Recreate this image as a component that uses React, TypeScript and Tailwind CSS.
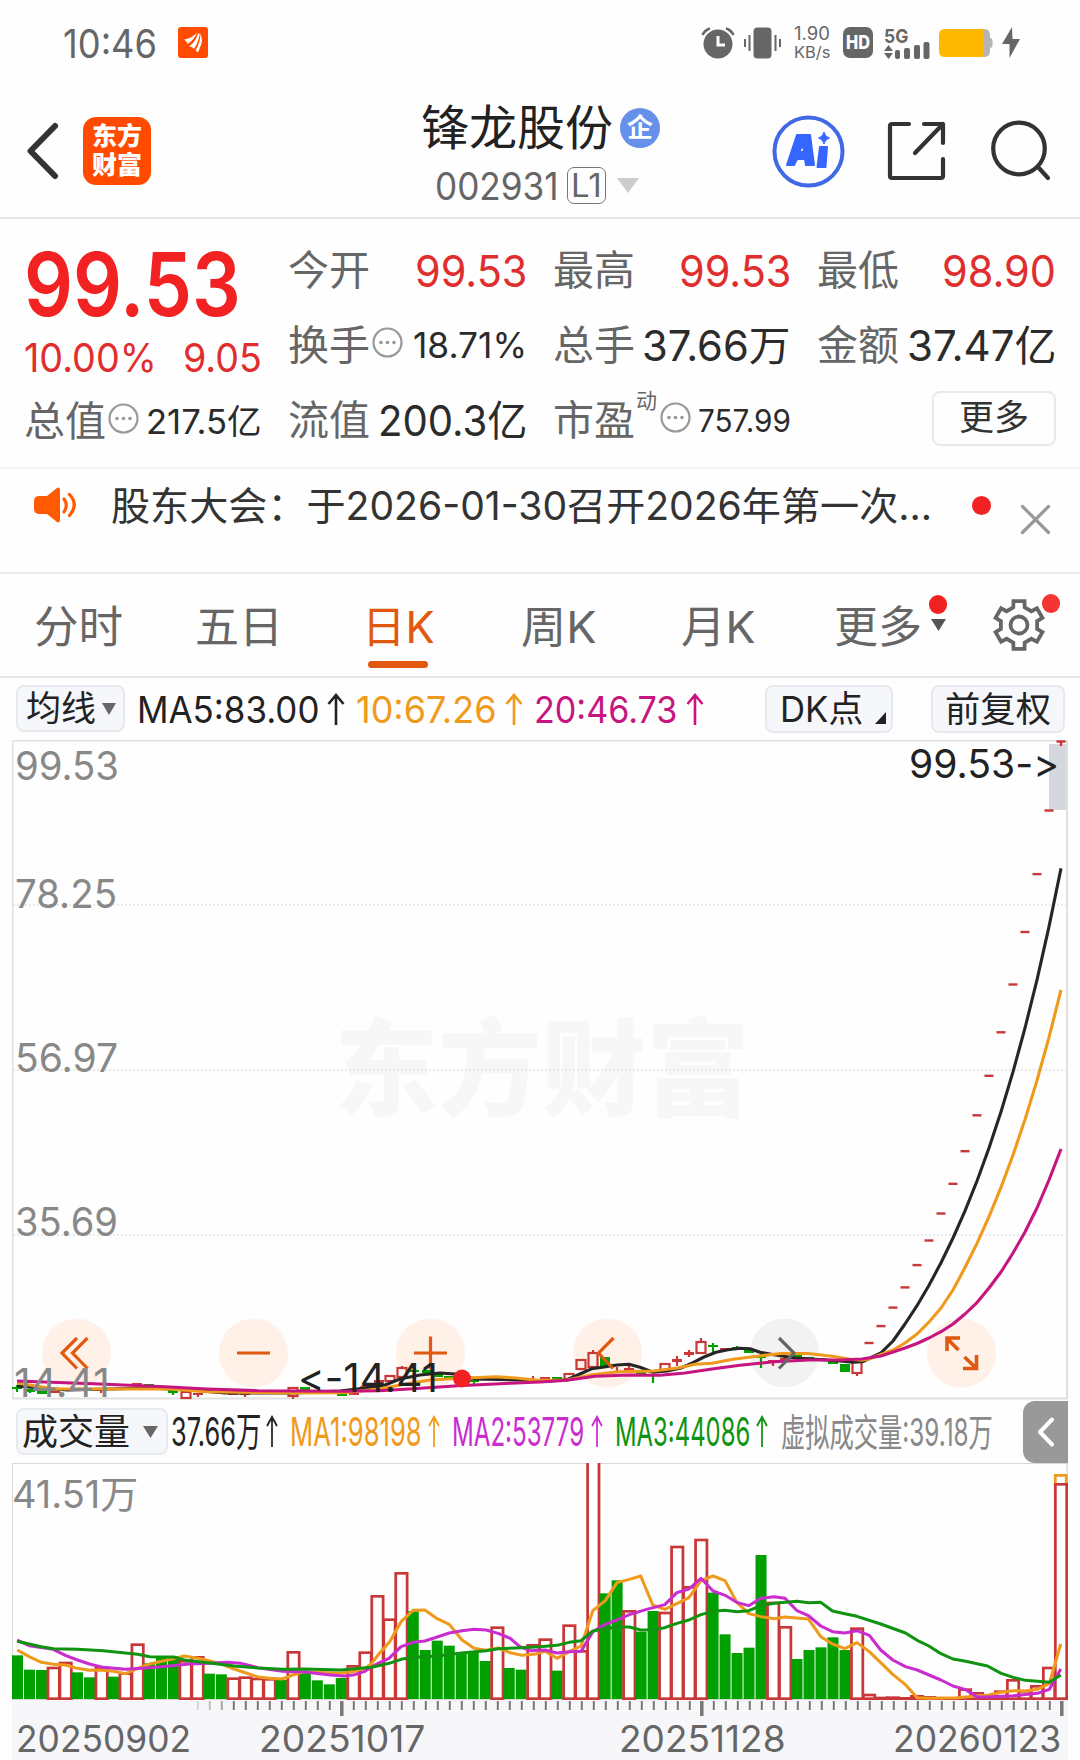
import React, { useLayoutEffect, useRef } from 'react';

type Point = [number, number];

interface Candle {
  x: number;
  top: number;
  bottom: number;
  high?: number;
  low?: number;
  kind: 'up' | 'down' | 'flat';
}

const UP = '#c93838';
const DOWN = '#00a000';

// Price panel, page pixels
const CANDLES: Candle[] = [
  { x: 17, top: 1387, bottom: 1389, high: 1385, low: 1392, kind: 'down' },
  { x: 30, top: 1389, bottom: 1392, low: 1393, kind: 'down' },
  { x: 42, top: 1391, bottom: 1394, kind: 'down' },
  { x: 55, top: 1391, bottom: 1393, kind: 'flat' },
  { x: 101, top: 1389, bottom: 1391, low: 1393, kind: 'flat' },
  { x: 137, top: 1383, bottom: 1386, kind: 'flat' },
  { x: 149, top: 1384, bottom: 1386, kind: 'down' },
  { x: 173, top: 1390, bottom: 1393, low: 1395, kind: 'down' },
  { x: 186, top: 1392, bottom: 1398, kind: 'up' },
  { x: 198, top: 1393, bottom: 1395, low: 1397, kind: 'flat' },
  { x: 233, top: 1393, bottom: 1395, kind: 'flat' },
  { x: 245, top: 1393, bottom: 1395, low: 1397, kind: 'flat' },
  { x: 293, top: 1388, bottom: 1396, low: 1399, kind: 'up' },
  { x: 305, top: 1387, bottom: 1390, kind: 'down' },
  { x: 342, top: 1394, bottom: 1396, kind: 'down' },
  { x: 354, top: 1393, bottom: 1395, kind: 'flat' },
  { x: 366, top: 1387, bottom: 1390, kind: 'up' },
  { x: 379, top: 1380, bottom: 1383, kind: 'flat' },
  { x: 390, top: 1376, bottom: 1381, kind: 'up' },
  { x: 402, top: 1368, bottom: 1377, high: 1366, kind: 'up' },
  { x: 414, top: 1370, bottom: 1372, kind: 'down' },
  { x: 427, top: 1370, bottom: 1373, kind: 'down' },
  { x: 438, top: 1374, bottom: 1377, kind: 'down' },
  { x: 449, top: 1376, bottom: 1378, kind: 'down' },
  { x: 474, top: 1380, bottom: 1382, low: 1384, kind: 'down' },
  { x: 533, top: 1381, bottom: 1383, high: 1376, kind: 'flat' },
  { x: 545, top: 1377, bottom: 1380, kind: 'flat' },
  { x: 557, top: 1377, bottom: 1380, kind: 'down' },
  { x: 569, top: 1374, bottom: 1379, kind: 'up' },
  { x: 581, top: 1360, bottom: 1369, kind: 'up' },
  { x: 593, top: 1353, bottom: 1367, high: 1350, kind: 'up' },
  { x: 605, top: 1357, bottom: 1366, kind: 'down' },
  { x: 617, top: 1371, bottom: 1373, high: 1367, kind: 'flat' },
  { x: 629, top: 1368, bottom: 1371, high: 1366, kind: 'flat' },
  { x: 641, top: 1372, bottom: 1374, kind: 'down' },
  { x: 653, top: 1374, bottom: 1376, low: 1383, kind: 'down' },
  { x: 665, top: 1364, bottom: 1371, kind: 'up' },
  { x: 677, top: 1359, bottom: 1362, high: 1356, low: 1366, kind: 'flat' },
  { x: 689, top: 1352, bottom: 1355, high: 1350, low: 1357, kind: 'flat' },
  { x: 701, top: 1342, bottom: 1353, high: 1338, kind: 'up' },
  { x: 713, top: 1345, bottom: 1347, high: 1343, low: 1352, kind: 'down' },
  { x: 725, top: 1348, bottom: 1350, kind: 'flat' },
  { x: 737, top: 1347, bottom: 1350, high: 1346, kind: 'down' },
  { x: 749, top: 1350, bottom: 1353, kind: 'down' },
  { x: 761, top: 1356, bottom: 1358, high: 1354, low: 1368, kind: 'down' },
  { x: 773, top: 1360, bottom: 1363, low: 1366, kind: 'flat' },
  { x: 785, top: 1358, bottom: 1362, kind: 'flat' },
  { x: 797, top: 1355, bottom: 1358, kind: 'down' },
  { x: 809, top: 1357, bottom: 1359, kind: 'down' },
  { x: 821, top: 1358, bottom: 1360, kind: 'flat' },
  { x: 833, top: 1361, bottom: 1364, kind: 'down' },
  { x: 845, top: 1364, bottom: 1372, kind: 'down' },
  { x: 857, top: 1362, bottom: 1373, low: 1376, kind: 'up' },
];

// one-price limit-up days
const LIMIT_UPS: number[] = [
  810.5, 874.1, 932, 984.5, 1032.3, 1075.8, 1115.3, 1151.2, 1183.8, 1213.5,
  1240.5, 1265.1, 1287.4, 1307.6, 1326.1, 1343,
];

const MA5: Point[] = [
  [17, 1386], [40, 1388], [68, 1390], [110, 1389], [150, 1388], [190, 1390], [225, 1393], [290, 1393], [340, 1391],
  [365, 1388], [385, 1385], [400, 1379], [420, 1375], [440, 1373], [455, 1374], [475, 1379], [520, 1380], [550, 1381],
  [567, 1379.7], [580, 1374], [592, 1368.7], [604, 1367], [617, 1365], [629, 1364.3], [640, 1367.3], [653, 1372.3],
  [667, 1371], [681, 1368], [693, 1362.7], [704, 1357], [716, 1352.3], [728, 1349.7], [740, 1348.3], [750, 1348.7],
  [760, 1352.3], [774, 1354.7], [795, 1358], [826, 1360], [840, 1361], [853, 1362.3], [863, 1361.5], [869, 1358.5],
  [881, 1352.8], [893, 1341], [905, 1324], [917, 1305.7], [929, 1285.2], [941, 1262.8], [953, 1238], [965, 1210.8],
  [977, 1181], [989, 1148], [1001, 1111.7], [1013, 1071.9], [1025, 1028], [1037, 979.8], [1049, 926.7], [1061, 868.4],
];

const MA10: Point[] = [
  [17, 1383], [55, 1389], [103, 1389], [165, 1388.7], [207, 1391.7], [293, 1393], [344, 1392.7], [379, 1389],
  [406, 1384], [430, 1380], [461, 1378.3], [496, 1376.7], [516, 1378], [537, 1380.3], [567, 1380], [592, 1374.7],
  [619, 1371.7], [653, 1371], [678, 1368], [695, 1364.3], [712, 1363.3], [733, 1359.3], [753, 1356.7], [781, 1353.5],
  [808, 1353.5], [832, 1356.3], [850, 1359.3], [862, 1360.3], [869, 1359], [881, 1354.5], [893, 1350], [905, 1343],
  [917, 1334], [929, 1322], [941, 1308], [953, 1290], [965, 1267.5], [977, 1243.4], [989, 1216.7], [1001, 1187.4],
  [1013, 1155], [1025, 1119.5], [1037, 1080.4], [1049, 1037.4], [1061, 990],
];

const MA20: Point[] = [
  [17, 1381], [100, 1384], [165, 1386.7], [207, 1389], [258, 1390.7], [344, 1391.3], [379, 1390.7], [413, 1388.7],
  [458, 1385.7], [510, 1383.3], [540, 1382], [567, 1380.3], [595, 1376.3], [629, 1375], [660, 1375.3], [685, 1373],
  [712, 1369], [740, 1365.3], [774, 1361.7], [809, 1360], [840, 1360], [862, 1359], [881, 1356], [893, 1352],
  [905, 1348], [917, 1343.5], [929, 1338], [941, 1331.7], [953, 1324], [965, 1314], [977, 1302.6], [989, 1288],
  [1001, 1272], [1013, 1253], [1025, 1232], [1037, 1208], [1049, 1180], [1061, 1149],
];

// Volume panel: top of every bar, positive = rising day, negative = falling day
const VOLUME: number[] = [
  -616, -659, -660, 654, 639, -667, -682, 653, -680, 671, 584, -640, -618, -618, 634, 622, -671, -673, 686, 683, 687,
  688, -690, 607, -668, -691, -703, -684, 649, 608, 439, 509, 370, -484, -600, -572, -587, -607, -604, -633, 533,
  -654, -659, 586, 569, -662, 527, 604, 30, -430, -391, 484, -545, -483, 489, 291, 412, 270, -428, -553, -609, -593,
  -315, 459, 532, -627, -600, -592, -562, -600, 536, 735, 744, 743, 745, 739, 742, 745, 745, 719, 730, 741, 725, 691,
  724, 709, 654, 103,
];

const VOL_MA1: Point[] = [
  [50, 600], [85, 620], [120, 637], [155, 643], [190, 645], [225, 655], [260, 661], [290, 660], [330, 664],
  [365, 671], [400, 655], [435, 642], [470, 634], [505, 626], [535, 618], [575, 625], [610, 633], [645, 643],
  [680, 657], [715, 669], [750, 681], [785, 685], [820, 687], [850, 675], [885, 665], [920, 667], [990, 670],
  [1030, 664], [1060, 655], [1080, 640], [1098, 615], [1132, 575], [1165, 515], [1200, 481], [1234, 480],
  [1270, 506], [1305, 523], [1342, 570], [1377, 595], [1412, 601], [1447, 594], [1482, 608], [1516, 616],
  [1551, 613], [1583, 604], [1618, 625], [1653, 605], [1688, 588], [1722, 482], [1758, 452], [1792, 398],
  [1828, 388], [1861, 378], [1896, 465], [1931, 478], [1966, 461], [2001, 443], [2036, 392], [2071, 378],
  [2106, 392], [2140, 457], [2175, 491], [2210, 500], [2248, 506], [2280, 501], [2348, 507], [2384, 560],
  [2418, 582], [2454, 596], [2489, 578], [2525, 605], [2558, 638], [2593, 673], [2630, 704], [2664, 743],
  [2698, 745], [2778, 743], [2868, 736], [2908, 727], [2943, 722], [2978, 723], [3013, 718], [3048, 700],
  [3081, 582],
];

const VOL_MA2: Point[] = [
  [50, 570], [85, 587], [155, 598], [190, 616], [225, 630], [260, 642], [300, 652], [365, 658], [435, 653],
  [500, 647], [550, 642], [610, 640], [660, 637], [700, 640], [750, 653], [820, 664], [885, 666], [960, 675],
  [1000, 678], [1030, 674], [1060, 664], [1098, 640], [1130, 625], [1165, 590], [1200, 577], [1234, 573],
  [1270, 561], [1305, 549], [1342, 542], [1377, 538], [1412, 540], [1447, 550], [1482, 565], [1510, 590],
  [1540, 602], [1583, 600], [1618, 609], [1653, 605], [1688, 604], [1722, 545], [1758, 523], [1792, 510],
  [1828, 494], [1878, 478], [1931, 464], [1966, 428], [2001, 417], [2036, 385], [2071, 423], [2106, 436],
  [2140, 457], [2175, 467], [2210, 445], [2248, 440], [2280, 445], [2315, 482], [2348, 497], [2384, 528],
  [2418, 545], [2454, 549], [2489, 542], [2525, 556], [2558, 600], [2593, 630], [2630, 650], [2664, 660],
  [2733, 690], [2768, 708], [2805, 719], [2838, 741], [2868, 741], [2943, 737], [3013, 730], [3048, 718],
  [3081, 657],
];

const VOL_MA3: Point[] = [
  [50, 574], [120, 590], [155, 596], [225, 598], [300, 602], [400, 613], [435, 620], [505, 621], [540, 631],
  [610, 639], [680, 648], [750, 654], [820, 658], [885, 657], [990, 660], [1080, 652], [1130, 640], [1165, 628],
  [1200, 622], [1270, 618], [1340, 609], [1412, 602], [1447, 596], [1500, 594], [1568, 590], [1618, 586],
  [1653, 577], [1688, 572], [1722, 543], [1758, 536], [1792, 531], [1828, 531], [1861, 540], [1896, 539],
  [1931, 533], [1966, 520], [2001, 510], [2036, 494], [2071, 484], [2106, 481], [2140, 485], [2175, 482],
  [2210, 467], [2248, 460], [2315, 454], [2348, 458], [2384, 457], [2418, 483], [2454, 491], [2489, 499],
  [2558, 522], [2630, 549], [2664, 571], [2698, 588], [2733, 611], [2768, 627], [2805, 634], [2868, 648],
  [2908, 670], [2943, 682], [2978, 691], [3013, 694], [3048, 697], [3081, 675],
];

const toLine = (points: Point[]) => points.map(p => p.join(',')).join(' ');

const gearPath = () => {
  const at = (deg: number, r: number) => {
    const a = ((deg - 90) * Math.PI) / 180;
    return `${(26 + r * Math.cos(a)).toFixed(2)} ${(26 + r * Math.sin(a)).toFixed(2)}`;
  };
  const parts: string[] = [];
  for (let i = 0; i < 6; i++) {
    const t = i * 60;
    parts.push(at(t - 18, 18.5), at(t - 13, 24.5), at(t + 13, 24.5), at(t + 18, 18.5));
  }
  return `M${parts.join('L')}Z`;
};

// Stretches or squeezes one line of text so it fills the width of its box
const FitText: React.FC<{ className: string; children: string }> = ({ className, children }) => {
  const box = useRef<HTMLSpanElement>(null);
  const text = useRef<HTMLSpanElement>(null);

  useLayoutEffect(() => {
    if (!box.current || !text.current) return;
    const ratio = box.current.clientWidth / text.current.offsetWidth;
    text.current.style.transform = `scaleX(${ratio})`;
  }, [children]);

  return (
    <span ref={box} className={`block shrink-0 whitespace-nowrap leading-none ${className}`}>
      <span ref={text} className="inline-block origin-left leading-none align-top">{children}</span>
    </span>
  );
};

const InfoDot: React.FC = () => (
  <svg className="h-[31px] w-[31px] shrink-0" viewBox="0 0 31 31" fill="none">
    <circle cx="15.5" cy="15.5" r="14" stroke="#999" strokeWidth="2.2" />
    <circle cx="9" cy="15.5" r="1.8" fill="#999" />
    <circle cx="15.5" cy="15.5" r="1.8" fill="#999" />
    <circle cx="22" cy="15.5" r="1.8" fill="#999" />
  </svg>
);

const UpArrow: React.FC<{ className: string }> = ({ className }) => (
  <svg className={`h-[33px] shrink-0 ${className}`} viewBox="0 0 18 33" preserveAspectRatio="none" fill="none" stroke="currentColor" strokeWidth="2.6">
    <path d="M9 32V2M1.5 11L9 2l7.5 9" />
  </svg>
);

const StatusBar: React.FC = () => (
  <div className="flex h-[85px] items-center pl-[63px] text-[#666]">
    <FitText className="mt-[2px] w-[94px] text-[39px]">10:46</FitText>
    <svg className="ml-[21px] h-[31px] w-[30px]" viewBox="0 0 30 31">
      <rect width="30" height="31" rx="3" fill="#ff4a00" />
      <path d="M6 12.500Q13 11.500 19 6Q16 13 9.500 17Q9 14 6 12.500Z" fill="#fff" />
      <path d="M11 19.500Q18 14.500 20 6.500L21.800 6.500Q21 14 16 22Q14 19 11 19.500Z" fill="#fff" />
      <path d="M17.500 23.500Q22.500 15 22.500 6.500Q25.500 14 22 20.500L20 25.500Z" fill="#fff" />
    </svg>
    <svg className="ml-[493px] h-[32px] w-[34px]" viewBox="0 0 34 32">
      <circle cx="17" cy="17" r="14.500" fill="#666" />
      <path d="M17 9v9h7" fill="none" stroke="#fff" strokeWidth="3" />
      <path d="M1.500 8Q4 3 9 1.500M32.500 8Q30 3 25 1.500" fill="none" stroke="#666" strokeWidth="2.600" />
    </svg>
    <svg className="ml-[9px] h-[32px] w-[37px]" viewBox="0 0 37 32" fill="#666">
      <rect x="9.500" y=".5" width="18" height="31" rx="4" />
      <path d="M0 12h2v8H0zM4.500 8h2v16h-2zM30.500 8h2v16h-2zM35 12h2v8h-2z" />
    </svg>
    <div className="ml-[13px] flex flex-col gap-[1px]">
      <FitText className="w-[36px] text-[18px]">1.90</FitText>
      <FitText className="w-[36px] text-[16px]">KB/s</FitText>
    </div>
    <div className="ml-[13px] flex h-[31px] w-[30px] items-center justify-center rounded-[7px] bg-[#666] text-white">
      <FitText className="w-[24px] text-[19px] font-extrabold">HD</FitText>
    </div>
    <div className="ml-[11px] flex h-[32px] w-[46px] flex-col">
      <FitText className="w-[24px] text-[19px] font-bold">5G</FitText>
      <svg className="-mt-[5px] h-[18px] w-[46px]" viewBox="0 0 46 18" fill="#666">
        <path d="M0 10L4.500 4l4.500 6zM0 12h9l-4.500 6z" />
        <rect x="11" y="9" width="5" height="9" rx="2" />
        <rect x="20" y="7" width="6" height="11" rx="2" />
        <rect x="30" y="4" width="6" height="14" rx="2" />
        <rect x="39.500" y="1" width="6" height="17" rx="2" />
      </svg>
    </div>
    <svg className="ml-[9px] mt-[1px] h-[28px] w-[54px]" viewBox="0 0 54 28">
      <path d="M38 0h7q6 0 6 6v3q2 0 2.500 2v6q-.5 2-2.500 2v3q0 6-6 6h-7z" fill="#b5b5b5" />
      <path d="M6 0h39v28H6q-6 0-6-6V6q0-6 6-6z" fill="#ffb800" />
    </svg>
    <svg className="ml-[9px] h-[31px] w-[18px]" viewBox="0 0 18 31">
      <path d="M10 0L0 17h7.500v14L18 12h-7.500z" fill="#666" />
    </svg>
  </div>
);

const Header: React.FC = () => (
  <header className="flex h-[134px] items-center border-b-2 border-[#e8e8e8]">
    <div className="flex w-[421px] items-center pl-[26px]">
      <svg className="h-[58px] w-[34px]" viewBox="0 0 34 58" fill="none" stroke="#333" strokeWidth="6" strokeLinecap="round" strokeLinejoin="round">
        <path d="M29 4L4.500 29 29 54" />
      </svg>
      <div className="ml-[23px] flex h-[68px] w-[68px] flex-col items-center justify-center gap-[4px] rounded-[13px] bg-[#ff4a00] text-[25px] font-black leading-none text-white">
        <span>东方</span>
        <span>财富</span>
      </div>
    </div>
    <div className="flex w-[240px] flex-col items-start pt-[6px]">
      <div className="flex items-center gap-[7px]">
        <FitText className="w-[192px] text-[48px] text-[#222]">锋龙股份</FitText>
        <div className="flex h-[40px] w-[40px] items-center justify-center rounded-full bg-[#6691ea] text-[26px] font-bold leading-none text-white">企</div>
      </div>
      <div className="ml-[14px] mt-[15px] flex items-center text-[#666]">
        <FitText className="w-[124px] text-[38px]">002931</FitText>
        <div className="ml-[8px] flex h-[37px] w-[39px] items-center justify-center rounded-[7px] border-[1.500px] border-[#777]">
          <FitText className="w-[31px] text-[32px]">L1</FitText>
        </div>
        <svg className="ml-[11px] h-[15px] w-[22px]" viewBox="0 0 22 15">
          <path d="M0 0h22L11 15z" fill="#ccc" />
        </svg>
      </div>
    </div>
    <div className="flex items-center pl-[111px]">
      <svg className="h-[73px] w-[73px]" viewBox="0 0 73 73">
        <circle cx="36.500" cy="36.500" r="34" fill="none" stroke="#4069e6" strokeWidth="4" />
        <g fill="#3566ff" stroke="#3566ff" strokeWidth="2" strokeLinejoin="round">
          <path fillRule="evenodd" d="M25 20h13l4 30h-8l-1-6h-8l-3 6h-7zM31 29l-4 8h5z" />
          <path d="M48 32h7l-1.500 20h-8z" />
        </g>
        <path d="M52 17q1 5 5.500 6-4.500 1-5.500 6-1-5-5.500-6 4.500-1 5.500-6z" fill="#3566ff" stroke="#3566ff" />
      </svg>
      <svg className="ml-[42px] h-[60px] w-[59px]" viewBox="0 0 59 60" fill="none" stroke="#333" strokeWidth="4.200" strokeLinecap="round" strokeLinejoin="round">
        <path d="M22 3H5Q3 3 3 5V55Q3 57 5 57H54Q56 57 56 55V38" />
        <path d="M37 3H56V22M56 3L28 32" />
      </svg>
      <svg className="ml-[45px] h-[62px] w-[60px]" viewBox="0 0 60 62" fill="none" stroke="#333" strokeWidth="4.200" strokeLinecap="round">
        <circle cx="28" cy="28.500" r="25.800" />
        <path d="M47 47L57 58" />
      </svg>
    </div>
  </header>
);

const Cell: React.FC<{ label: string; info?: boolean; mark?: string; children: React.ReactNode }> = ({ label, info, mark, children }) => (
  <div className="flex h-[75px] items-center">
    <FitText className="w-[82px] text-[41px] text-[#666]">{label}</FitText>
    {mark && <span className="-mt-[40px] ml-px w-[22px] text-[21px] leading-none text-[#666]">{mark}</span>}
    {info && <div className="-mt-[6px] ml-[2px]"><InfoDot /></div>}
    <div className="ml-auto text-[#2b2b2b]">{children}</div>
  </div>
);

const QuotePanel: React.FC = () => (
  <section className="flex h-[250px] gap-[26px] border-b-2 border-[#f5f5f5] pl-[24px] pt-[14px]">
    <div className="w-[238px]">
      <div className="flex h-[101px] items-center text-[#f22222]">
        <FitText className="w-[217px] text-[88px] font-semibold">99.53</FitText>
      </div>
      <div className="flex h-[47px] items-center justify-between text-[#e02d2d]">
        <FitText className="w-[133px] text-[40px]">10.00%</FitText>
        <FitText className="w-[79px] text-[40px]">9.05</FitText>
      </div>
      <div className="pt-[3px]">
        <Cell label="总值" info>
          <FitText className="w-[116px] text-[34px]">217.5亿</FitText>
        </Cell>
      </div>
    </div>
    <div className="w-[239px]">
      <Cell label="今开"><FitText className="w-[112px] text-[44px] text-[#e02d2d]">99.53</FitText></Cell>
      <Cell label="换手" info><FitText className="w-[114px] text-[35px]">18.71%</FitText></Cell>
      <Cell label="流值"><FitText className="w-[149px] text-[42px]">200.3亿</FitText></Cell>
    </div>
    <div className="w-[238px]">
      <Cell label="最高"><FitText className="w-[112px] text-[44px] text-[#e02d2d]">99.53</FitText></Cell>
      <Cell label="总手"><FitText className="w-[149px] text-[42px]">37.66万</FitText></Cell>
      <Cell label="市盈" mark="动" info><FitText className="w-[93px] text-[31px]">757.99</FitText></Cell>
    </div>
    <div className="w-[239px]">
      <Cell label="最低"><FitText className="w-[114px] text-[44px] text-[#e02d2d]">98.90</FitText></Cell>
      <Cell label="金额"><FitText className="w-[149px] text-[42px]">37.47亿</FitText></Cell>
      <div className="flex h-[71px] items-center justify-end">
        <button className="flex h-[55px] w-[124px] items-center justify-center rounded-lg border-2 border-[#e8e9ee] pb-[2px] text-[35px] leading-none text-[#333]">更多</button>
      </div>
    </div>
  </section>
);

const Notice: React.FC = () => (
  <section className="flex h-[105px] items-start border-b-2 border-[#e8eaeb] pl-[34px] pt-[16px]">
    <svg className="mt-[2px] h-[36px] w-[44px]" viewBox="0 0 44 36">
      <path d="M6 9h7L23 1q3-1.500 3 2v30q0 3.500-3 2l-10-8H6q-6 0-6-5v-8q0-5 6-5z" fill="#ff5a00" />
      <path d="M30 12q4.500 6 0 13M35.500 7.500q9.500 10 0 21" fill="none" stroke="#ff5a00" strokeWidth="3.200" strokeLinecap="round" />
    </svg>
    <FitText className="ml-[33px] mt-[1px] w-[821px] text-[39px] text-[#333]">股东大会：于2026-01-30召开2026年第一次...</FitText>
    <span className="ml-[40px] mt-[11px] h-[19px] w-[19px] rounded-full bg-[#f22222]" />
    <svg className="ml-[29px] mt-[19px] h-[31px] w-[31px]" viewBox="0 0 31 31" stroke="#999" strokeWidth="3.200" strokeLinecap="round">
      <path d="M2.500 2.500l26 26M28.500 2.500l-26 26" />
    </svg>
  </section>
);

const Tabs: React.FC = () => (
  <nav className="flex h-[104px] items-center border-b-2 border-[#e6e6e6] pl-[34px] pt-[4px] text-[44px] text-[#666]">
    <FitText className="w-[89px]">分时</FitText>
    <FitText className="ml-[72px] w-[88px]">五日</FitText>
    <div className="relative ml-[79px] text-[#e0590f]">
      <FitText className="w-[73px]">日K</FitText>
      <span className="absolute -bottom-[19px] left-[6px] h-[7px] w-[60px] rounded-full bg-[#e0590f]" />
    </div>
    <FitText className="ml-[86px] w-[76px]">周K</FitText>
    <FitText className="ml-[84px] w-[75px]">月K</FitText>
    <FitText className="ml-[78px] w-[88px]">更多</FitText>
    <div className="ml-[7px] flex w-[18px] flex-col items-center gap-[5px] pb-[14px]">
      <span className="-mt-[14px] h-[19px] w-[18px] rounded-full bg-[#f22222]" />
      <svg className="h-[12px] w-[15px]" viewBox="0 0 15 12"><path d="M0 0h15L7.500 12z" fill="#555" /></svg>
    </div>
    <div className="relative -mt-[4px] ml-[46px]">
      <svg className="h-[52px] w-[52px]" viewBox="0 0 52 52" fill="none" stroke="#666" strokeWidth="3.800">
        <path d={gearPath()} />
        <circle cx="26" cy="26" r="8.500" />
      </svg>
      <span className="absolute -right-[15px] -top-[5px] h-[19px] w-[18px] rounded-full bg-[#f53434]" />
    </div>
  </nav>
);

const MaRow: React.FC = () => (
  <div className="flex h-[62px] items-center pl-[16px] text-[37px]">
    <button className="-mt-[1px] flex h-[47px] w-[109px] items-center justify-between rounded-[8px] border-2 border-[#e6e9ee] bg-[#f6f7fa] pl-[8px] pr-[7px] text-[#222]">
      <FitText className="w-[70px] text-[35px]">均线</FitText>
      <svg className="h-[12px] w-[14px]" viewBox="0 0 14 12"><path d="M0 0h14L7 12z" fill="#666" /></svg>
    </button>
    <div className="flex items-center text-[#222]">
      <FitText className="ml-[12px] w-[182px]">MA5:83.00</FitText>
      <UpArrow className="ml-[8px] w-[18px]" />
    </div>
    <div className="flex items-center text-[#ef9a1c]">
      <FitText className="ml-[11px] w-[140px]">10:67.26</FitText>
      <UpArrow className="ml-[9px] w-[18px]" />
    </div>
    <div className="flex items-center text-[#c7157f]">
      <FitText className="ml-[11px] w-[143px]">20:46.73</FitText>
      <UpArrow className="ml-[9px] w-[18px]" />
    </div>
    <button className="ml-[61px] flex h-[48px] w-[128px] shrink-0 items-center justify-between rounded-[8px] border-2 border-[#e6e9ee] bg-[#f6f7fa] pl-[13px] pr-[5px] text-[#222]">
      <FitText className="w-[83px] text-[36px]">DK点</FitText>
      <svg className="mt-[18px] h-[12px] w-[11px]" viewBox="0 0 11 12"><path d="M11 0v12H0z" fill="#222" /></svg>
    </button>
    <button className="ml-[38px] flex h-[48px] w-[134px] shrink-0 items-center justify-center rounded-[8px] border-2 border-[#e6e9ee] bg-[#f6f7fa] text-[#222]">
      <FitText className="w-[106px] text-[35px]">前复权</FitText>
    </button>
  </div>
);

const PriceChart: React.FC = () => (
  <svg className="ml-[12px] block h-[660px] w-[1056px] [font-feature-settings:'calt'_0]" viewBox="12 740 1056 660">
    <text x="334" y="1107" fontSize="105" fontWeight="900" fill="#f7f7f7" textLength="416" lengthAdjust="spacingAndGlyphs">东方财富</text>
    <g stroke="#e2e2e2" strokeWidth="1.500" strokeDasharray="2 2">
      <path d="M13 905H1067M13 1070H1067M13 1235H1067" />
    </g>
    <path d="M12.500 740.500H1067V1398.500H12.500Z" fill="none" stroke="#e0e0e0" strokeWidth="2" />
    <rect x="1049" y="744" width="17.500" height="66" fill="#d4d7dc" />

    {[76.5, 253.5, 430.5, 607.5, 961.5].map(x => (
      <circle key={x} cx={x} cy="1353" r="34.500" fill="#fff0e8" />
    ))}
    <circle cx="784.500" cy="1353" r="34.500" fill="#f2f2f2" />

    {/* Candles */}
    {CANDLES.map(c => {
      const color = c.kind === 'down' ? DOWN : UP;
      return (
        <g key={c.x} stroke={color} strokeWidth="2.2">
          {c.high && <path d={`M${c.x} ${c.high}V${c.top}`} />}
          {c.low && <path d={`M${c.x} ${c.bottom}V${c.low}`} />}
          {c.kind === 'up' ? (
            <rect x={c.x - 4.5} y={c.top} width="9" height={c.bottom - c.top} fill="none" />
          ) : (
            <rect x={c.x - 5} y={c.top} width="10" height={c.bottom - c.top} fill={color} stroke="none" />
          )}
        </g>
      );
    })}
    {LIMIT_UPS.map((y, i) => (
      <path key={y} d={`M${1044.5 - i * 12} ${y}h9`} stroke={UP} strokeWidth="2.400" />
    ))}
    <path d="M1056.500 741.500h9M1061 741v5" stroke={UP} strokeWidth="2.400" />

    {/* Moving averages */}
    <g fill="none" strokeWidth="3.100" strokeLinejoin="round">
      <polyline points={toLine(MA5)} stroke="#262626" />
      <polyline points={toLine(MA10)} stroke="#ef9a1c" />
      <polyline points={toLine(MA20)} stroke="#c7157f" />
    </g>

    {/* Control icons */}
    <g fill="none" stroke="#e0590f" strokeWidth="3.200">
      <path d="M77 1338L62 1353l15 15.500M87.500 1338L72.500 1353l15 15.500" />
      <path d="M237 1353H270M414 1353H447M430.500 1336.500V1369.500" />
      <path d="M613.500 1338L598.500 1353l14.500 15.500" />
      <path d="M960 1338H947V1351M947 1338.500L958.500 1350M963 1368.500H976.500V1355M976 1368L964.500 1357" strokeWidth="3.600" />
    </g>
    <path d="M779 1338l15 15-15 15.500" fill="none" stroke="#666" strokeWidth="3.200" />

    <g fontSize="40" fill="#888">
      <text x="15" y="780" textLength="104" lengthAdjust="spacingAndGlyphs">99.53</text>
      <text x="15" y="908" textLength="102" lengthAdjust="spacingAndGlyphs">78.25</text>
      <text x="15" y="1072" textLength="103" lengthAdjust="spacingAndGlyphs">56.97</text>
      <text x="15" y="1236" textLength="103" lengthAdjust="spacingAndGlyphs">35.69</text>
      <text x="14" y="1397" textLength="96" lengthAdjust="spacingAndGlyphs">14.41</text>
    </g>
    <g fontSize="40" fill="#222">
      <text x="909" y="778" textLength="150" lengthAdjust="spacingAndGlyphs">99.53-&gt;</text>
      <text x="298" y="1392" textLength="140" lengthAdjust="spacingAndGlyphs">&lt;-14.41</text>
    </g>
    <circle cx="462" cy="1378.500" r="9" fill="#f22222" />
  </svg>
);

const VolumeRow: React.FC = () => (
  <div className="flex h-[63px] items-center pl-[16px] text-[40px]">
    <button className="flex h-[47px] w-[152px] shrink-0 items-center rounded-[8px] border-2 border-[#e6e9ee] bg-[#f6f7fa] pl-[4px] text-[#222]">
      <FitText className="w-[108px] text-[36px]">成交量</FitText>
      <svg className="ml-[13px] h-[12px] w-[15px]" viewBox="0 0 15 12"><path d="M0 0h15L7.500 12z" fill="#666" /></svg>
    </button>
    <div className="ml-[3px] flex items-center text-[#222]">
      <FitText className="w-[90px]">37.66万</FitText>
      <UpArrow className="ml-[5px] w-[12px]" />
    </div>
    <div className="ml-[12px] flex items-center text-[#ef9a1c]">
      <FitText className="w-[132px]">MA1:98198</FitText>
      <UpArrow className="ml-[6px] w-[12px]" />
    </div>
    <div className="ml-[12px] flex items-center text-[#c92ccf]">
      <FitText className="w-[132px]">MA2:53779</FitText>
      <UpArrow className="ml-[7px] w-[12px]" />
    </div>
    <div className="ml-[12px] flex items-center text-[#0f9310]">
      <FitText className="w-[135px]">MA3:44086</FitText>
      <UpArrow className="ml-[6px] w-[12px]" />
    </div>
    <FitText className="ml-[13px] w-[212px] text-[38px] text-[#888]">虚拟成交量:39.18万</FitText>
    <button className="ml-auto mr-[12px] flex h-[62px] w-[45px] items-center justify-center rounded-l-[12px] bg-[#999]">
      <svg className="h-[30px] w-[18px]" viewBox="0 0 18 30" fill="none" stroke="#fff" strokeWidth="4" strokeLinecap="round" strokeLinejoin="round">
        <path d="M15 2.500L3 15l12 12.500" />
      </svg>
    </button>
  </div>
);

const VolumeChart: React.FC = () => (
  <div className="relative ml-[12px] h-[237px] w-[1056px]">
    <svg className="block h-full w-full" viewBox="35 39 3067 711" preserveAspectRatio="none">
      <path d="M36 40H3099V748H36Z" fill="none" stroke="#d8d8d8" strokeWidth="4" />
      <path d="M3065 120V76H3097V120" fill="none" stroke="#ef9a1c" strokeWidth="8" />
      {VOLUME.map((v, i) => {
        const x = 51 + i * 34.83;
        const top = Math.abs(v);
        return v < 0 ? (
          <rect key={i} x={x - 16} y={top} width="32" height={747 - top} fill={DOWN} />
        ) : (
          <rect key={i} x={x - 16} y={top} width="33" height={Math.max(746 - top, 1)} fill="#fff" stroke={UP} strokeWidth="8" />
        );
      })}
      <g fill="none" strokeWidth="9" strokeLinejoin="round">
        <polyline points={toLine(VOL_MA1)} stroke="#ef9a1c" />
        <polyline points={toLine(VOL_MA2)} stroke="#c92ccf" />
        <polyline points={toLine(VOL_MA3)} stroke="#0f9310" />
      </g>
    </svg>
    <FitText className="absolute left-0 top-[12px] w-[126px] text-[38px] text-[#888]">41.51万</FitText>
  </div>
);

const DateAxis: React.FC = () => (
  <div className="ml-[12px] h-[60px] w-[1056px] bg-[#f7f7fa] text-[37px] text-[#666]">
    <svg className="block h-[18px] w-full" viewBox="12 0 1056 18">
      {VOLUME.map((_, i) => {
        if (i < 15) return null;
        const major = i % 30 === 27;
        return (
          <path
            key={i}
            d={`M${17.8 + i * 12} 1V${major ? 16 : 10}`}
            stroke="#777"
            strokeWidth={major ? 3.5 : 2}
            opacity={i < 18 ? 0.25 + (i - 15) * 0.2 : 1}
          />
        );
      })}
    </svg>
    <div className="flex items-center pl-[4px] pt-[2px]">
      <FitText className="w-[175px]">20250902</FitText>
      <FitText className="ml-[68px] w-[166px]">20251017</FitText>
      <FitText className="ml-[194px] w-[167px]">20251128</FitText>
      <FitText className="ml-[107px] w-[168px]">20260123</FitText>
    </div>
  </div>
);

const App: React.FC = () => {
  return (
    <div lang="zh-CN" className="h-[1760px] w-[1080px] overflow-hidden bg-[#fefefe] font-['Inter','Noto_Sans_CJK_SC',sans-serif]">
      <StatusBar />
      <Header />
      <QuotePanel />
      <Notice />
      <Tabs />
      <MaRow />
      <PriceChart />
      <VolumeRow />
      <VolumeChart />
      <DateAxis />
    </div>
  );
};

export default App;
